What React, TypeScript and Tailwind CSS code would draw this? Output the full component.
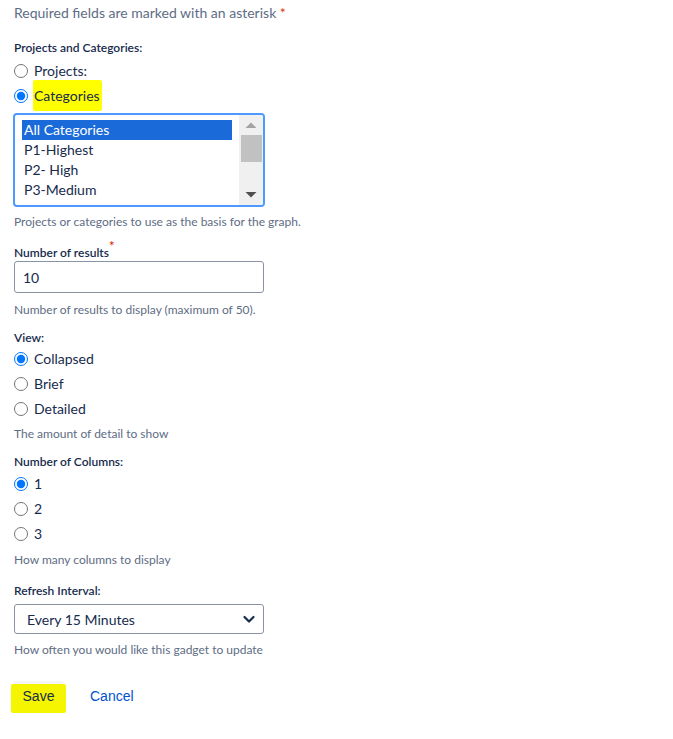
import { useState } from 'react';

const categories = ['All Categories', 'P1-Highest', 'P2- High', 'P3-Medium', 'P4-Low', 'P5-Lowest'];

function Radio({ name, label, checked, onChange, highlight }: { name: string; label: string; checked: boolean; onChange: () => void; highlight?: boolean }) {
  return (
    <label className="flex items-center h-[25px] cursor-pointer">
      <input type="radio" name={name} checked={checked} onChange={onChange} className="w-[14px] h-[14px] m-0 ml-[14px] accent-[#0075ff]" />
      <span className={'text-[14px] text-[#172b4d] ' + (highlight ? 'bg-[#ffff00] ml-[5px] pl-[1px] pr-[2px] py-[5px] rounded-[2px]' : 'ml-[6px]')}>
        {label}
      </span>
    </label>
  );
}

function Label({ children }: { children: React.ReactNode }) {
  return <div className="text-[12px] font-semibold text-[#172b4d] leading-[16px]">{children}</div>;
}

function Help({ children }: { children: React.ReactNode }) {
  return <div className="text-[12px] text-[#5e6c84] leading-[16px]">{children}</div>;
}

export default function App() {
  const [source, setSource] = useState('categories');
  const [view, setView] = useState('collapsed');
  const [cols, setCols] = useState('1');
  const [selected, setSelected] = useState(0);

  return (
    <div className="w-[673px] h-[739px] bg-white font-['Lato',sans-serif]">
      <div className="pl-[14px] pt-[4px] text-[14px] text-[#5e6c84] leading-[18px]">
        Required fields are marked with an asterisk <span className="text-[#de350b]">*</span>
      </div>

      <div className="pl-[14px] mt-[18px]">
        <Label>Projects and Categories:</Label>
      </div>
      <div className="mt-[2px]">
        <Radio name="src" label="Projects:" checked={source === 'projects'} onChange={() => setSource('projects')} />
        <Radio name="src" label="Categories" checked={source === 'categories'} onChange={() => setSource('categories')} highlight />
      </div>

      {/* Category list box */}
      <div className="ml-[13px] mt-[5px] w-[252px] h-[94px] border-2 border-[#4c9aff] rounded-[4px] flex overflow-hidden">
        <div className="flex-1 pt-[5px] pl-[7px] pr-[7px] overflow-hidden">
          {categories.slice(0, 4).map((c, i) => (
            <div
              key={c}
              onClick={() => setSelected(i)}
              className={'h-[20px] leading-[20px] pl-[2px] text-[14px] ' + (selected === i ? 'bg-[#1a6ad9] text-white' : 'text-[#172b4d]')}
            >
              {c}
            </div>
          ))}
        </div>
        <div className="w-[24px] bg-[#f0f0f0] flex flex-col items-center">
          <svg width="24" height="18" viewBox="0 0 24 18" className="mt-[1px]">
            <path d="M6.5 12 L12 6.5 L17.5 12 Z" fill="#a3a3a3" />
          </svg>
          <div className="w-[21px] h-[27px] bg-[#c1c1c1] mt-[1px]" />
          <div className="flex-1" />
          <svg width="24" height="18" viewBox="0 0 24 18" className="mb-[1px]">
            <path d="M6.5 6 L12 11.5 L17.5 6 Z" fill="#505050" />
          </svg>
        </div>
      </div>
      <div className="pl-[14px] mt-[7px]">
        <Help>Projects or categories to use as the basis for the graph.</Help>
      </div>

      <div className="pl-[14px] mt-[15px]">
        <Label>
          Number of results<span className="relative -top-[6px] text-[#de350b] text-[13px] leading-none">*</span>
        </Label>
        <input
          defaultValue="10"
          className="block w-[250px] h-[32px] border border-[#8993a4] rounded-[3px] px-[8px] text-[14px] text-[#172b4d] outline-none"
        />
        <div className="mt-[9px]">
          <Help>Number of results to display (maximum of 50).</Help>
        </div>
      </div>

      <div className="pl-[14px] mt-[12px]">
        <Label>View:</Label>
      </div>
      <div>
        <Radio name="view" label="Collapsed" checked={view === 'collapsed'} onChange={() => setView('collapsed')} />
        <Radio name="view" label="Brief" checked={view === 'brief'} onChange={() => setView('brief')} />
        <Radio name="view" label="Detailed" checked={view === 'detailed'} onChange={() => setView('detailed')} />
      </div>
      <div className="pl-[14px] mt-[5px]">
        <Help>The amount of detail to show</Help>
      </div>

      <div className="pl-[14px] mt-[12px]">
        <Label>Number of Columns:</Label>
      </div>
      <div className="mt-[1px]">
        <Radio name="cols" label="1" checked={cols === '1'} onChange={() => setCols('1')} />
        <Radio name="cols" label="2" checked={cols === '2'} onChange={() => setCols('2')} />
        <Radio name="cols" label="3" checked={cols === '3'} onChange={() => setCols('3')} />
      </div>
      <div className="pl-[14px] mt-[6px]">
        <Help>How many columns to display</Help>
      </div>

      <div className="pl-[14px] mt-[15px]">
        <Label>Refresh Interval:</Label>
        <div className="mt-[5px] w-[250px] h-[30px] border border-[#8993a4] rounded-[3px] flex items-center pl-[12px] pr-[7px] text-[14px] text-[#172b4d]">
          <span className="flex-1">Every 15 Minutes</span>
          <svg width="14" height="14" viewBox="0 0 14 14">
            <path d="M2.5 5 L7 9.5 L11.5 5" stroke="#172b4d" strokeWidth="2.2" fill="none" strokeLinecap="round" strokeLinejoin="round" />
          </svg>
        </div>
        <div className="mt-[8px]">
          <Help>How often you would like this gadget to update</Help>
        </div>
      </div>

      <div className="flex items-center mt-[23px] pl-[13px] font-['Liberation_Sans',sans-serif] text-[14px]">
        <div className="relative w-[51px] h-[30px] rounded-[3px] bg-[#f4f5f7]">
          <div className="absolute left-[-2px] top-[3px] w-[55px] h-[29px] bg-[#f5f500] rounded-[2px]" />
          <span className="absolute inset-0 flex items-center justify-center text-[#172b4d]">Save</span>
        </div>
        <a className="ml-[26px] text-[#0052cc]">Cancel</a>
      </div>
    </div>
  );
}
